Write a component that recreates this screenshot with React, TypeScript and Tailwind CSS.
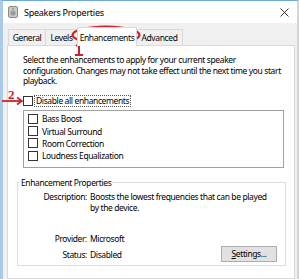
import React from "react";

function Box() {
  return <span className="inline-block w-[10px] h-[10px] border border-[#333333] bg-white shrink-0" />;
}

export default function App() {
  const font = "font-['Noto_Sans',sans-serif]";
  return (
    <div className={`relative w-[299px] h-[279px] overflow-hidden bg-[#f0f0f0] text-[8.5px] tracking-[-0.38px] leading-[11px] text-black ${font}`}>
      <div className="flex flex-col h-full border-t border-t-[#6fa8dc] border-l-[3px] border-l-[#a9cbe8] border-r-2 border-r-[#d4d4d4]">
        {/* title bar */}
        <div className="h-[22px] bg-white flex items-center pl-[5px] pr-[8px]">
          <svg width="10" height="12" viewBox="0 0 10 12" className="shrink-0">
            <rect x="0.5" y="0.5" width="9" height="11" rx="1.5" fill="#c9c9c9" stroke="#8a8a8a" />
            <circle cx="5" cy="7" r="2.6" fill="#9a9a9a" />
            <circle cx="5" cy="2.8" r="1" fill="#9a9a9a" />
          </svg>
          <span className="ml-[6px] text-[9px] tracking-[-0.25px]">Speakers Properties</span>
          <svg width="9" height="9" viewBox="0 0 9 9" className="ml-auto">
            <path d="M0.5 0.5 L8.5 8.5 M8.5 0.5 L0.5 8.5" stroke="#222" strokeWidth="0.9" />
          </svg>
        </div>
        {/* tabs */}
        <div className="h-[22px] flex items-end pl-[5px]">
          <div className="w-[38px] h-[16px] border border-[#d9d9d9] border-b-0 flex items-center justify-center bg-[#f0f0f0]">General</div>
          <div className="w-[32px] h-[16px] border border-[#d9d9d9] border-l-0 border-b-0 flex items-center justify-center bg-[#f0f0f0]">Levels</div>
          <div className="relative z-10 -mb-px -ml-[1px] w-[60px] h-[19px] border border-[#d9d9d9] border-b-0 flex items-center justify-center bg-white">Enhancements</div>
          <div className="-ml-[1px] w-[47px] h-[16px] border border-[#d9d9d9] border-b-0 flex items-center justify-center bg-[#f0f0f0]">Advanced</div>
        </div>
        {/* panel */}
        <div className="flex-1 ml-[4px] mr-[2px] bg-white border border-[#d9d9d9] pl-[15px] pr-[4px] pt-[9px]">
          <p className="leading-[10.5px]">
            Select the enhancements to apply for your current speaker
            <br />
            configuration. Changes may not take effect until the next time you start
            <br />
            playback.
          </p>
          <div className="mt-[8px] flex items-center h-[12px]">
            <Box />
            <span className="ml-[2px] px-[1px] outline-1 outline-dotted outline-[#555] leading-[10px]">Disable all enhancements</span>
          </div>
          <div className="mt-[3px] mr-[6px] h-[58px] border border-[#a0a0a0] pl-[4px] pt-[2px] flex flex-col">
            {["Bass Boost", "Virtual Surround", "Room Correction", "Loudness Equalization"].map((t) => (
              <div key={t} className="h-[12.4px] flex items-center">
                <Box />
                <span className="ml-[4px]">{t}</span>
              </div>
            ))}
          </div>
          <div className="relative mt-[14px] mr-[4px] ml-[-6px] h-[84px] border border-[#dcdcdc]">
            <span className="absolute -top-[6px] left-[2px] bg-white px-[1px]">Enhancement Properties</span>
            <div className="pt-[8px] grid grid-cols-[69px_1fr] gap-x-[3px]">
              <span className="text-right">Description:</span>
              <span className="max-w-[182px]">Boosts the lowest frequencies that can be played by the device.</span>
            </div>
            <div className="mt-[20px] grid grid-cols-[69px_1fr] gap-x-[3px]">
              <span className="text-right">Provider:</span>
              <span>Microsoft</span>
            </div>
            <div className="mt-[3px] grid grid-cols-[69px_1fr_auto] gap-x-[3px] items-center pr-[8px]">
              <span className="text-right">Status:</span>
              <span>Disabled</span>
              <span className="w-[56px] h-[16px] -mt-[1px] bg-[#e1e1e1] border border-[#adadad] flex items-center justify-center">
                <span><span className="underline">S</span>ettings...</span>
              </span>
            </div>
          </div>
        </div>
      </div>
      {/* annotations */}
      <svg className="absolute left-0 top-0 pointer-events-none" width="299" height="279" viewBox="0 0 299 279">
        <ellipse cx="106" cy="35" rx="33.5" ry="8.5" fill="none" stroke="#d0202a" strokeWidth="2.2" />
        <path d="M79 44 L79 55 M76 46 L79 44 M75 55 L83 55" stroke="#d0202a" strokeWidth="2" fill="none" />
        <text x="8" y="99" fontSize="13" fontFamily="Liberation Serif, serif" fill="#d0202a" fontWeight="bold">2</text>
        <path d="M2 101 L21 101" stroke="#d0202a" strokeWidth="1.8" />
        <path d="M17 97.5 L22 101 L17 104.5" stroke="#d0202a" strokeWidth="1.6" fill="none" />
      </svg>
    </div>
  );
}
